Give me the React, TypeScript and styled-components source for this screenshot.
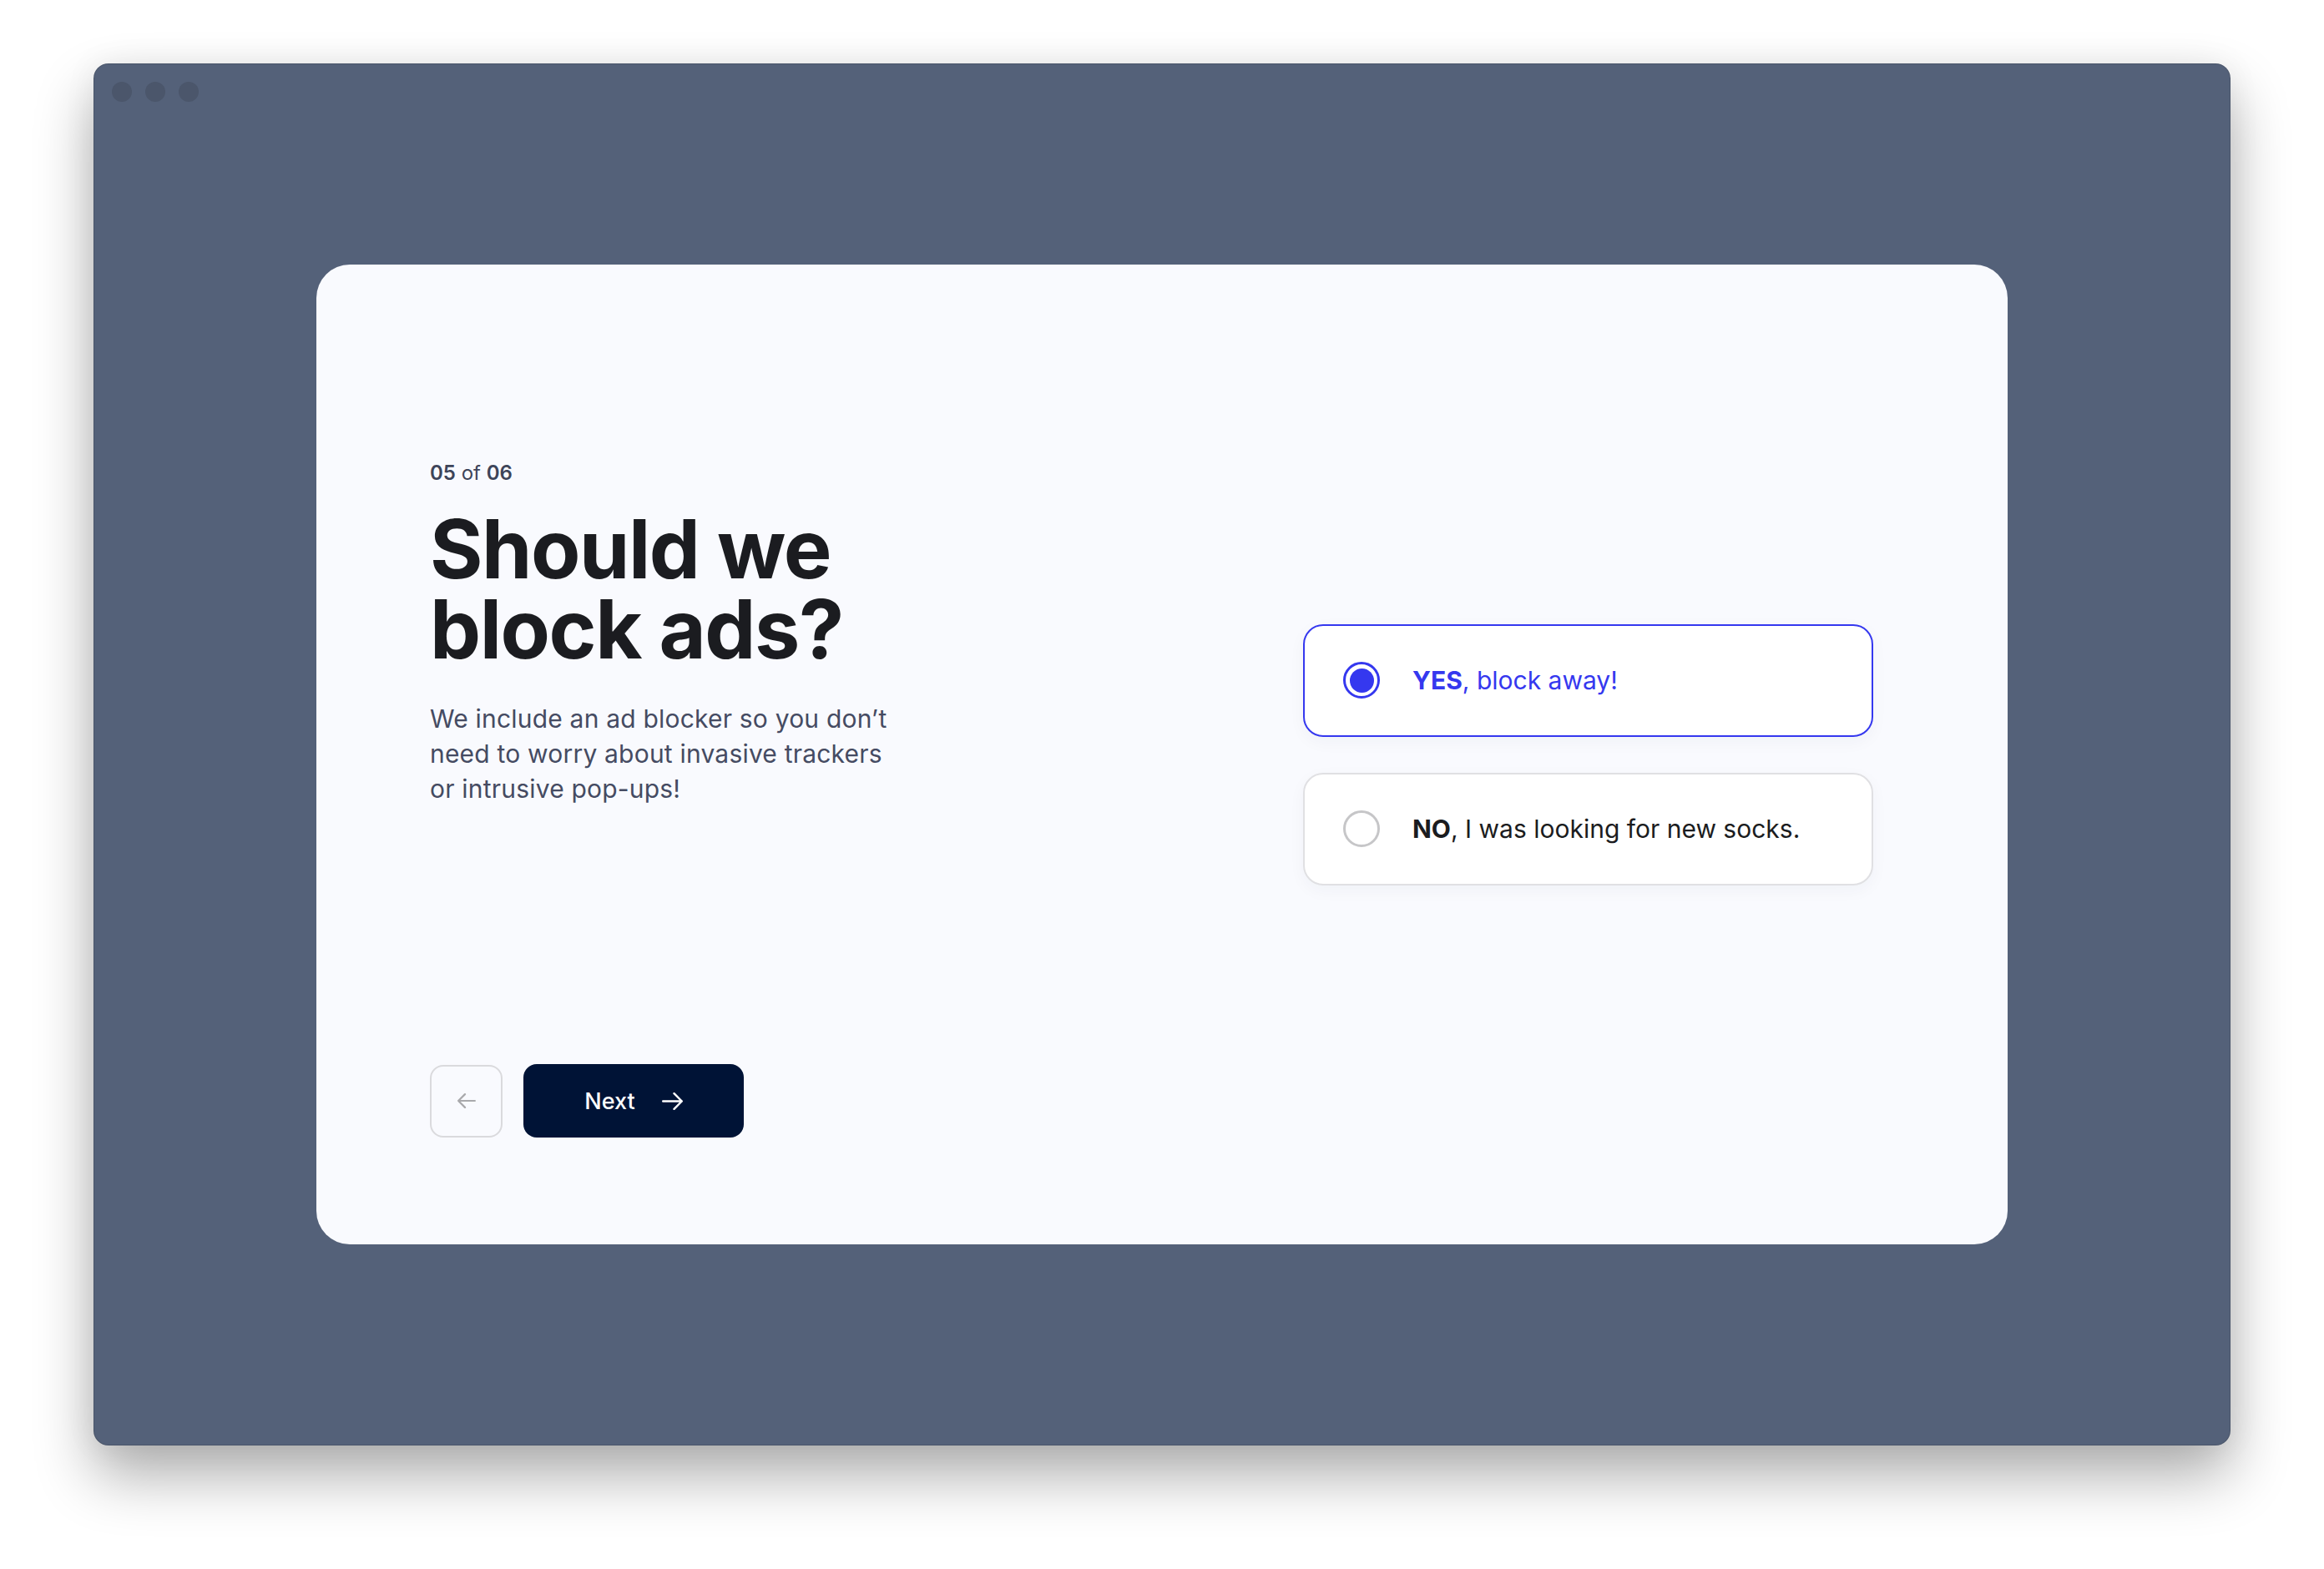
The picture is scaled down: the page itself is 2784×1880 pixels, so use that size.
import React, { useState } from "react";
import styled, { createGlobalStyle } from "styled-components";

const GlobalStyle = createGlobalStyle`
  html, body {
    margin: 0;
    padding: 0;
    background: #ffffff;
  }
  body {
    font-family: Inter, "Noto Sans", "Liberation Sans", sans-serif;
    -webkit-font-smoothing: antialiased;
  }
  * { box-sizing: border-box; }
`;

const Page = styled.div`
  width: 2784px;
  height: 1880px;
  padding: 76px 0 0 112px;
  background: #ffffff;
`;

const Window = styled.div`
  position: relative;
  width: 2560px;
  height: 1656px;
  background: #546179;
  border-radius: 18px;
  border: 1px solid rgba(0, 0, 0, 0.12);
  box-shadow: 0 36px 70px rgba(0, 0, 0, 0.32), 0 0 40px rgba(0, 0, 0, 0.06);
  display: flex;
  align-items: center;
  justify-content: center;
`;

const TrafficLights = styled.div`
  position: absolute;
  top: 21px;
  left: 21px;
  display: flex;
  gap: 16px;
`;

const Light = styled.span`
  width: 24px;
  height: 24px;
  border-radius: 50%;
  background: #4b566b;
`;

const Card = styled.div`
  width: 2026px;
  height: 1174px;
  background: #f9fafe;
  border-radius: 40px;
  padding: 128px 161px 128px 136px;
  display: grid;
  grid-template-columns: 1fr 683px;
`;

const LeftColumn = styled.div`
  display: flex;
  flex-direction: column;
  justify-content: space-between;
`;

const TextBlock = styled.div`
  margin-top: 106px;
  display: flex;
  flex-direction: column;
`;

const Step = styled.div`
  font-size: 24px;
  line-height: 32px;
  color: #3d4459;
  font-weight: 400;
`;

const StepNum = styled.span`
  font-weight: 600;
`;

const Title = styled.h1`
  margin: 27px 0 0;
  font-size: 97px;
  line-height: 96px;
  font-weight: 700;
  letter-spacing: -0.015em;
  color: #1b1c20;
`;

const Description = styled.p`
  margin: 38px 0 0;
  max-width: 580px;
  font-size: 30px;
  line-height: 42px;
  letter-spacing: 0.2px;
  color: #454b62;
  font-weight: 400;
`;

const ButtonRow = styled.div`
  display: flex;
  gap: 25px;
  align-items: center;
`;

const BackButton = styled.button`
  width: 87px;
  height: 87px;
  border: 2px solid #dadadd;
  border-radius: 16px;
  background: transparent;
  display: flex;
  align-items: center;
  justify-content: center;
  padding: 0;
  cursor: pointer;
`;

const NextButton = styled.button`
  width: 264px;
  height: 88px;
  border: none;
  border-radius: 16px;
  background: #001336;
  color: #ffffff;
  font-family: Inter, "Noto Sans", sans-serif;
  font-size: 27px;
  font-weight: 500;
  display: flex;
  align-items: center;
  justify-content: center;
  gap: 32px;
  cursor: pointer;
  padding: 0;
`;

const RightColumn = styled.div`
  display: flex;
  flex-direction: column;
  justify-content: center;
  gap: 43px;
`;

const Option = styled.button<{ $selected: boolean }>`
  height: 135px;
  width: 683px;
  border-radius: 24px;
  background: #ffffff;
  border: 2px solid ${(p) => (p.$selected ? "#3538ef" : "#e0e0e3")};
  box-shadow: 0 6px 20px rgba(30, 40, 80, 0.04);
  display: flex;
  align-items: center;
  gap: 39px;
  padding: 0 0 0 46px;
  font-family: Inter, "Noto Sans", sans-serif;
  font-size: 30px;
  color: ${(p) => (p.$selected ? "#3538ef" : "#1b1c20")};
  text-align: left;
  cursor: pointer;
`;

const Radio = styled.span<{ $selected: boolean }>`
  flex: none;
  width: 44px;
  height: 44px;
  border-radius: 50%;
  border: 3px solid ${(p) => (p.$selected ? "#3538ef" : "#c6c6c8")};
  display: flex;
  align-items: center;
  justify-content: center;
`;

const RadioDot = styled.span`
  width: 29px;
  height: 29px;
  border-radius: 50%;
  background: #3538ef;
`;

const Strong = styled.strong`
  font-weight: 700;
`;

const ArrowIcon = ({ dir, color, w, h, sw }: { dir: "left" | "right"; color: string; w: number; h: number; sw: number }) => {
  const mid = h / 2;
  const head = h / 2 - sw / 2;
  const d =
    dir === "right"
      ? `M${sw / 2} ${mid}H${w - sw / 2} M${w - sw / 2 - head} ${mid - head}L${w - sw / 2} ${mid}L${w - sw / 2 - head} ${mid + head}`
      : `M${w - sw / 2} ${mid}H${sw / 2} M${sw / 2 + head} ${mid - head}L${sw / 2} ${mid}L${sw / 2 + head} ${mid + head}`;
  return (
    <svg width={w} height={h} viewBox={`0 0 ${w} ${h}`} fill="none">
      <path d={d} stroke={color} strokeWidth={sw} strokeLinecap="round" strokeLinejoin="round" />
    </svg>
  );
};

export default function App() {
  const [choice, setChoice] = useState<"yes" | "no">("yes");
  return (
    <>
      <GlobalStyle />
      <Page>
        <Window>
          <TrafficLights>
            <Light />
            <Light />
            <Light />
          </TrafficLights>
          <Card>
            <LeftColumn>
              <TextBlock>
                <Step>
                  <StepNum>05</StepNum> of <StepNum>06</StepNum>
                </Step>
                <Title>
                  Should we
                  <br />
                  block ads?
                </Title>
                <Description>
                  We include an ad blocker so you don’t need to worry about invasive trackers or intrusive pop-ups!
                </Description>
              </TextBlock>
              <ButtonRow>
                <BackButton aria-label="Back">
                  <ArrowIcon dir="left" color="#a9a9ac" w={22} h={18} sw={2.2} />
                </BackButton>
                <NextButton>
                  Next
                  <ArrowIcon dir="right" color="#ffffff" w={25} h={21} sw={2.4} />
                </NextButton>
              </ButtonRow>
            </LeftColumn>
            <RightColumn>
              <Option $selected={choice === "yes"} onClick={() => setChoice("yes")}>
                <Radio $selected={choice === "yes"}>{choice === "yes" && <RadioDot />}</Radio>
                <span>
                  <Strong>YES</Strong>, block away!
                </span>
              </Option>
              <Option $selected={choice === "no"} onClick={() => setChoice("no")}>
                <Radio $selected={choice === "no"}>{choice === "no" && <RadioDot />}</Radio>
                <span>
                  <Strong>NO</Strong>, I was looking for new socks.
                </span>
              </Option>
            </RightColumn>
          </Card>
        </Window>
      </Page>
    </>
  );
}
